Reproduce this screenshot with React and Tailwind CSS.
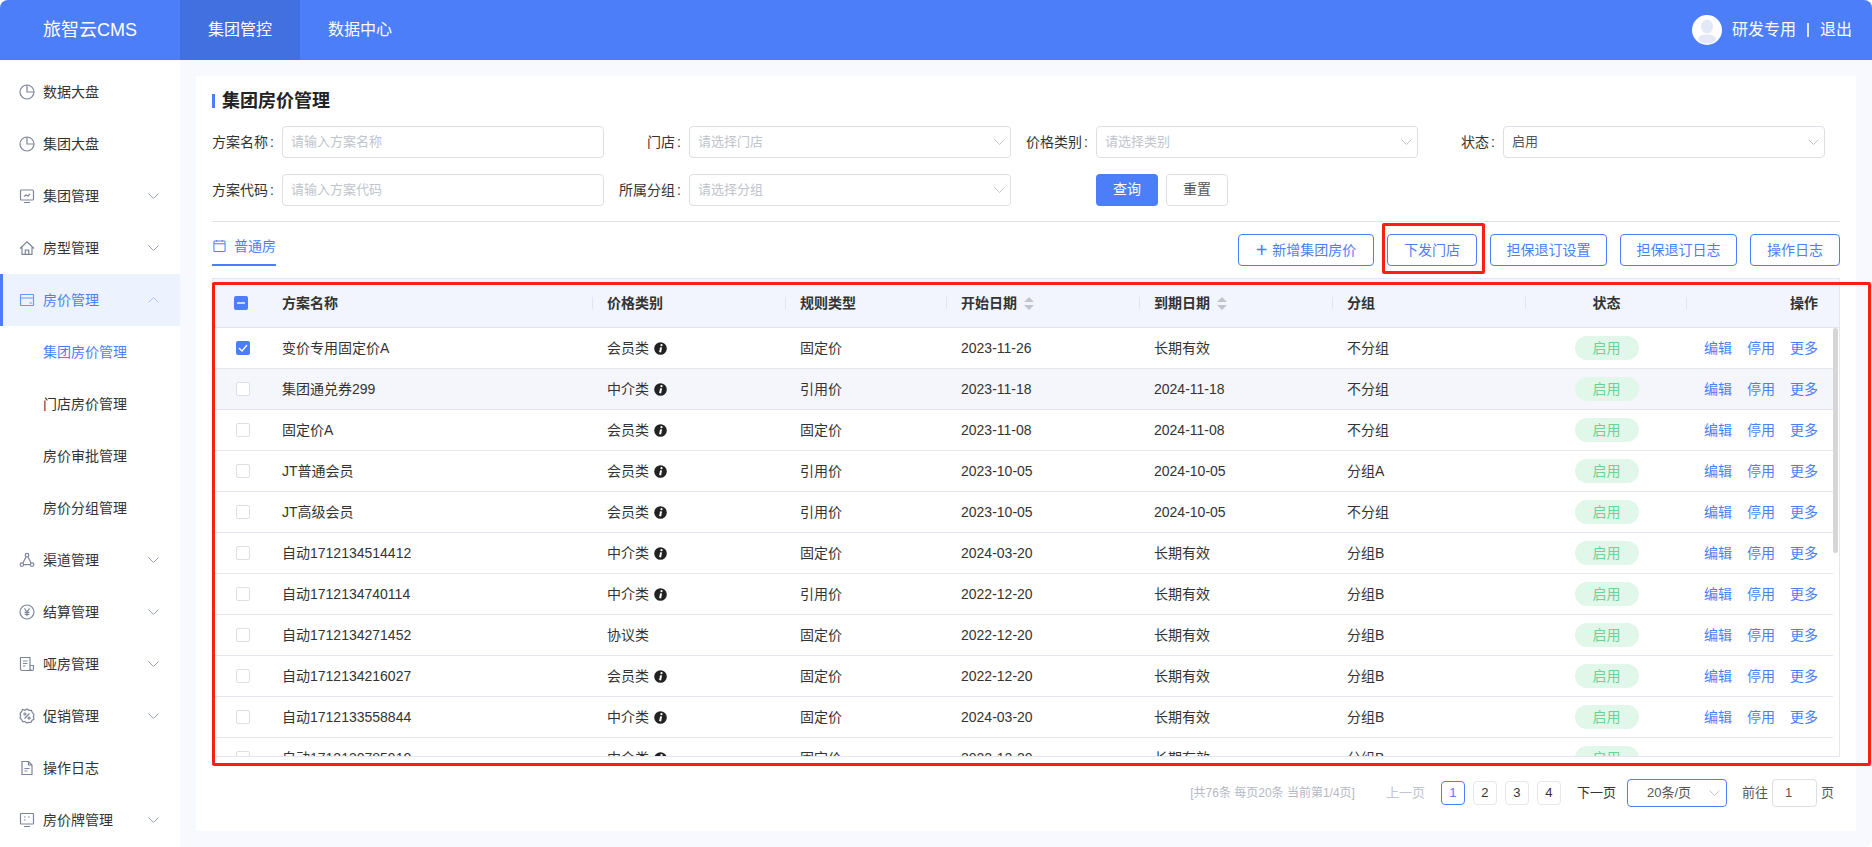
import React from "react";

const stroke = "#7d8699";

function Ico({ color, children }) {
  return (
    <svg width="16" height="16" viewBox="0 0 16 16" fill="none" stroke={color || stroke} strokeWidth="1.2" className="shrink-0">
      {children}
    </svg>
  );
}

const icons = {
  pie: (
    <>
      <circle cx="8" cy="8" r="7" />
      <path d="M8 1v7h7" />
    </>
  ),
  chart: (
    <>
      <rect x="1.5" y="2" width="13" height="10" rx="1" />
      <path d="M5 14.5h6M5 8.5l2-1.5 2 1 2-2" />
    </>
  ),
  home: <path d="M1 8.5L8 1.8l7 6.7M3 7.3v7h10v-7M6.3 14.3v-4.2h3.4v4.2" />,
  card: (
    <>
      <rect x="1.5" y="2.5" width="13" height="11" rx="0.5" />
      <path d="M1.5 6h13M10.5 11h2.5" />
    </>
  ),
  net: (
    <>
      <circle cx="8" cy="3.2" r="1.8" />
      <circle cx="2.9" cy="12.6" r="1.8" />
      <circle cx="13.1" cy="12.6" r="1.8" />
      <path d="M7.1 4.8L3.9 11M8.9 4.8L12.1 11M4.8 12.6h6.4" />
    </>
  ),
  yen: (
    <>
      <circle cx="8" cy="8" r="7" />
      <path d="M5.5 4.3L8 8l2.5-3.7M8 8v4.2M5.6 8.4h4.8M5.6 10.4h4.8" />
    </>
  ),
  receipt: <path d="M1.5 1.5h9.5v13H3a1.5 1.5 0 0 1-1.5-1.5zM4 5h4.5M4 7.5h4.5M4 10h2.5M11 9.5h3.5V13a1.5 1.5 0 0 1-3 0" />,
  promo: (
    <>
      <path d="M8 1l2 1.3 2.4.1 1 2.2 1.6 1.8-.6 2.3.6 2.3-2 1.4-1 2.1-2.4-.1L8 15l-2-1.5-2.4.1-1-2.1-1.6-1.4.6-2.3-.6-2.3 1.6-1.8 1-2.2L6 2.3z" />
      <path d="M5.5 10.5l5-5" />
      <circle cx="5.9" cy="6" r="1" />
      <circle cx="10.1" cy="10" r="1" />
    </>
  ),
  file: <path d="M3 1.5h6.5L13 5v9.5H3zM9.5 1.5V5H13M5.5 8.5h5M5.5 11h3" />,
  board: (
    <>
      <rect x="1.5" y="1.5" width="13" height="10.5" rx="0.5" />
      <path d="M5 14.5h6M5 5h1.6M9 5h1.6M5 8h1.6" />
    </>
  ),
};

function Chevron({ up, color }) {
  return (
    <svg width="11" height="6" viewBox="0 0 11 6" fill="none" stroke={color || "#97a0b3"} strokeWidth="1" className="shrink-0">
      <path d={up ? "M.5 5.5l5-5 5 5" : "M.5.5l5 5 5-5"} />
    </svg>
  );
}

function SideItem({ icon, label, arrow, active, up }) {
  return (
    <div className={"h-[52px] flex items-center pl-[16px] pr-[21px] border-l-[3px] " + (active ? "bg-[#ecf3ff] border-[#4c7efa] text-[#4c7efa]" : "border-transparent text-[#333]")}>
      <Ico color={active ? "#6f97fb" : undefined}>{icons[icon]}</Ico>
      <span className="ml-2 flex-1 text-[14px] whitespace-nowrap">{label}</span>
      {arrow && <Chevron up={up} color={active ? "#a8c0fb" : undefined} />}
    </div>
  );
}

function SubItem({ label, active }) {
  return <div className={"h-[52px] flex items-center pl-[43px] text-[14px] " + (active ? "text-[#4c7efa]" : "text-[#333]")}>{label}</div>;
}

function Field({ label, children }) {
  return (
    <div className="flex items-center">
      <div className="w-[62px] whitespace-nowrap text-[14px] text-[#333] flex justify-end">
        {label}
        {label && <span className="ml-[2px]">:</span>}
      </div>
      <div className="ml-2 w-[322px]">{children}</div>
    </div>
  );
}

function Input({ placeholder }) {
  return (
    <div className="h-[32px] border border-[#dcdfe6] rounded-[4px] flex items-center px-2 text-[13px] text-[#c0c4cc] bg-white">{placeholder}</div>
  );
}

function Select({ placeholder, value }) {
  return (
    <div className="h-[32px] border border-[#dcdfe6] rounded-[4px] flex items-center justify-between pl-2 pr-[5px] text-[13px] bg-white">
      <span className={value ? "text-[#555]" : "text-[#c0c4cc]"}>{value || placeholder}</span>
      <Chevron color="#c0c4cc" />
    </div>
  );
}

function OutBtn({ children, w }) {
  return (
    <button className={"h-[32px] border border-[#4c7efa] rounded-[4px] text-[14px] text-[#4c7efa] flex items-center justify-center bg-white " + w}>{children}</button>
  );
}

function Sort() {
  return (
    <svg width="10" height="13" viewBox="0 0 10 13" fill="#c0c4cc" className="ml-[7px]">
      <path d="M5 0l5 5H0zM5 13L0 8h10z" />
    </svg>
  );
}

function Info() {
  return (
    <svg width="13" height="13" viewBox="0 0 13 13" className="ml-[5px]">
      <circle cx="6.5" cy="6.5" r="6.3" fill="#222" />
      <path d="M7.1 5.4L6.1 10.2" stroke="#fff" strokeWidth="2" />
      <circle cx="7.5" cy="3.2" r="1.1" fill="#fff" />
    </svg>
  );
}

const rows = [
  ["变价专用固定价A", "会员类", 1, "固定价", "2023-11-26", "长期有效", "不分组"],
  ["集团通兑券299", "中介类", 1, "引用价", "2023-11-18", "2024-11-18", "不分组"],
  ["固定价A", "会员类", 1, "固定价", "2023-11-08", "2024-11-08", "不分组"],
  ["JT普通会员", "会员类", 1, "引用价", "2023-10-05", "2024-10-05", "分组A"],
  ["JT高级会员", "会员类", 1, "引用价", "2023-10-05", "2024-10-05", "不分组"],
  ["自动1712134514412", "中介类", 1, "固定价", "2024-03-20", "长期有效", "分组B"],
  ["自动1712134740114", "中介类", 1, "引用价", "2022-12-20", "长期有效", "分组B"],
  ["自动1712134271452", "协议类", 0, "固定价", "2022-12-20", "长期有效", "分组B"],
  ["自动1712134216027", "会员类", 1, "固定价", "2022-12-20", "长期有效", "分组B"],
  ["自动1712133558844", "中介类", 1, "固定价", "2024-03-20", "长期有效", "分组B"],
  ["自动1712130785910", "中介类", 1, "固定价", "2022-12-20", "长期有效", "分组B"],
];

function Head({ children, center, right }) {
  let align = "pl-[14px]";
  if (center) align = "justify-center pl-[1px]";
  if (right) align = "justify-end pr-[21px]";
  return (
    <div className="flex items-center">
      <div className={"h-3 w-full border-l border-[#e2e5ee] flex items-center font-bold " + align}>{children}</div>
    </div>
  );
}

function PageNo({ n, active }) {
  return (
    <div className={"w-[24px] h-[24px] rounded-[4px] border flex items-center justify-center text-[13px] " + (active ? "border-[#4c7efa] text-[#4c7efa]" : "border-[#e4e7ed] text-[#333]")}>{n}</div>
  );
}

export default function App() {
  return (
    <div className="relative w-[1872px] h-[847px] overflow-hidden bg-white font-['Liberation_Sans','Noto_Sans_CJK_SC',sans-serif]">
      <div className="h-full rounded-[8px] overflow-hidden flex flex-col bg-[#f7f9fe]">
        {/* top bar */}
        <div className="h-[60px] shrink-0 bg-[#4c7efa] flex items-center text-white">
          <div className="w-[180px] pl-[43px] text-[18px]">旅智云CMS</div>
          <div className="w-[120px] h-full bg-[#4370e0] flex items-center justify-center text-[16px]">集团管控</div>
          <div className="w-[120px] h-full flex items-center justify-center text-[16px]">数据中心</div>
          <div className="ml-auto flex items-center pr-5 text-[16px]">
            <div className="w-[30px] h-[30px] rounded-full bg-white overflow-hidden mr-[10px]">
              <svg width="30" height="30" viewBox="0 0 30 30" fill="#e3e8f7">
                <ellipse cx="15" cy="11.5" rx="6" ry="7" />
                <ellipse cx="15" cy="24" rx="9" ry="4.5" />
              </svg>
            </div>
            <span>研发专用</span>
            <span className="w-[2px] h-[14px] bg-white/80 mx-[11px]"></span>
            <span>退出</span>
          </div>
        </div>

        <div className="flex flex-1 min-h-0">
          {/* side menu */}
          <div className="w-[180px] shrink-0 bg-white pt-[6px] overflow-hidden">
            <SideItem icon="pie" label="数据大盘" />
            <SideItem icon="pie" label="集团大盘" />
            <SideItem icon="chart" label="集团管理" arrow />
            <SideItem icon="home" label="房型管理" arrow />
            <SideItem icon="card" label="房价管理" arrow up active />
            <SubItem label="集团房价管理" active />
            <SubItem label="门店房价管理" />
            <SubItem label="房价审批管理" />
            <SubItem label="房价分组管理" />
            <SideItem icon="net" label="渠道管理" arrow />
            <SideItem icon="yen" label="结算管理" arrow />
            <SideItem icon="receipt" label="哑房管理" arrow />
            <SideItem icon="promo" label="促销管理" arrow />
            <SideItem icon="file" label="操作日志" />
            <SideItem icon="board" label="房价牌管理" arrow />
          </div>

          {/* content */}
          <div className="flex-1 px-4 pt-4 pb-4 min-w-0">
            <div className="h-[755px] bg-white px-4 pt-[18px]">
              <div className="flex items-center h-[14px]">
                <span className="w-[3px] h-[14px] bg-[#4c7efa]"></span>
                <span className="ml-[7px] text-[18px] font-bold text-[#222]">集团房价管理</span>
              </div>

              <div className="mt-[18px] grid grid-cols-[393px_393px_393px_393px] gap-x-[14px] gap-y-4">
                <Field label="方案名称"><Input placeholder="请输入方案名称" /></Field>
                <Field label="门店"><Select placeholder="请选择门店" /></Field>
                <Field label="价格类别"><Select placeholder="请选择类别" /></Field>
                <Field label="状态"><Select value="启用" /></Field>
                <Field label="方案代码"><Input placeholder="请输入方案代码" /></Field>
                <Field label="所属分组"><Select placeholder="请选择分组" /></Field>
                <Field label="">
                  <div className="flex gap-2 -mt-px">
                    <button className="w-[62px] h-[32px] rounded-[4px] bg-[#4c7efa] text-white text-[14px]">查询</button>
                    <button className="w-[62px] h-[32px] rounded-[4px] border border-[#dcdfe6] text-[#555] text-[14px] bg-white">重置</button>
                  </div>
                </Field>
              </div>

              <div className="mt-[15px] h-px bg-[#e1e3e9]"></div>

              <div className="pt-3 flex justify-between items-end">
                <div className="h-[32px] w-[64px] border-b-2 border-[#4c7efa] flex items-start -mt-[2px] text-[#4c7efa]">
                  <svg width="14" height="14" viewBox="0 0 14 14" fill="none" stroke="#4c7efa" strokeWidth="1.1" className="mt-[5px] ml-px">
                    <rect x="1" y="1.5" width="12" height="11.5" rx="1" />
                    <path d="M1 4.5h12M4 .5v2M10 .5v2" />
                  </svg>
                  <span className="ml-2 text-[14px] leading-[24px] whitespace-nowrap">普通房</span>
                </div>
                <div className="flex gap-[13px]">
                  <OutBtn w="w-[136px]"><span className="text-[20px] font-light leading-none mr-[5px]">+</span>新增集团房价</OutBtn>
                  <OutBtn w="w-[90px]">下发门店</OutBtn>
                  <OutBtn w="w-[117px]">担保退订设置</OutBtn>
                  <OutBtn w="w-[117px]">担保退订日志</OutBtn>
                  <OutBtn w="w-[90px]">操作日志</OutBtn>
                </div>
              </div>

              {/* table */}
              <div className="mt-3 border border-[#e4e7f0] text-[14px] text-[#333]">
                <div className="h-[49px] bg-[#f2f5fe] border-b border-[#e1e4ee] grid grid-cols-[54px_325px_193px_161px_193px_193px_193px_161px_153px]">
                  <div className="flex items-center pl-[21px]">
                    <div className="w-[14px] h-[14px] rounded-[2px] bg-[#4c7efa] flex items-center justify-center">
                      <span className="w-2 h-[2px] bg-[#c9d8fd]"></span>
                    </div>
                  </div>
                  <div className="flex items-center pl-[15px] font-bold">方案名称</div>
                  <Head>价格类别</Head>
                  <Head>规则类型</Head>
                  <Head>开始日期<Sort /></Head>
                  <Head>到期日期<Sort /></Head>
                  <Head>分组</Head>
                  <Head center>状态</Head>
                  <Head right>操作</Head>
                </div>

                <div className="h-[428px] flex overflow-hidden">
                  <div className="w-[1620px]">
                    {rows.map((r, i) => (
                      <div key={i} className={"h-[41px] border-b border-[#e3e6ef] grid grid-cols-[54px_325px_193px_161px_193px_193px_193px_161px_147px] items-center " + (i === 1 ? "bg-[#f5f6fb]" : "bg-white")}>
                        <div className="pl-[23px]">
                          {i === 0 ? (
                            <div className="w-[14px] h-[14px] rounded-[2px] bg-[#4c7efa] flex items-center justify-center">
                              <svg width="10" height="8" viewBox="0 0 10 8" fill="none" stroke="#fff" strokeWidth="1.2">
                                <path d="M1 4l3 3 5-6" />
                              </svg>
                            </div>
                          ) : (
                            <div className="w-[14px] h-[14px] rounded-[2px] border border-[#dcdfe6] bg-white"></div>
                          )}
                        </div>
                        <div className="pl-[15px]">{r[0]}</div>
                        <div className="pl-[15px] flex items-center">{r[1]}{r[2] === 1 && <Info />}</div>
                        <div className="pl-[15px]">{r[3]}</div>
                        <div className="pl-[15px]">{r[4]}</div>
                        <div className="pl-[15px]">{r[5]}</div>
                        <div className="pl-[15px]">{r[6]}</div>
                        <div className="flex justify-center pl-[2px]">
                          <span className="w-[64px] h-[24px] rounded-full bg-[#e1f7e9] text-[#6bd29a] flex items-center justify-center">启用</span>
                        </div>
                        {i < 10 && (
                          <div className="flex justify-end gap-[15px] pr-[15px] text-[#4c7efa]">
                            <span>编辑</span>
                            <span>停用</span>
                            <span>更多</span>
                          </div>
                        )}
                      </div>
                    ))}
                  </div>
                  <div className="w-[6px] shrink-0 bg-white">
                    <div className="w-[5px] h-[225px] rounded-full bg-[#d6d6d6]"></div>
                  </div>
                </div>
              </div>

              {/* pagination */}
              <div className="mt-[22px] pr-[6px] h-[28px] flex items-center justify-end text-[13px] text-[#333]">
                <span className="text-[12px] text-[#b4b8c4]">[共76条 每页20条 当前第1/4页]</span>
                <span className="ml-[31px] text-[#c0c4cc]">上一页</span>
                <div className="ml-[16px] flex gap-2">
                  <PageNo n="1" active />
                  <PageNo n="2" />
                  <PageNo n="3" />
                  <PageNo n="4" />
                </div>
                <span className="ml-4">下一页</span>
                <div className="ml-[11px] w-[100px] h-[28px] rounded-[4px] border border-[#4c7efa] flex items-center justify-between pl-[19px] pr-[6px] text-[#555]">
                  <span>20条/页</span>
                  <Chevron color="#c0c4cc" />
                </div>
                <span className="ml-[15px] text-[#555]">前往</span>
                <div className="ml-[4px] w-[45px] h-[28px] rounded-[4px] border border-[#dcdfe6] flex items-center pl-3 text-[#555]">1</div>
                <span className="ml-[4px] text-[#555]">页</span>
              </div>
            </div>
          </div>
        </div>
      </div>

      {/* red annotation boxes */}
      <div className="absolute left-[1382px] top-[223px] w-[103px] h-[51px] border-[3px] border-[#ff1e12] rounded-[2px]"></div>
      <div className="absolute left-[212px] top-[282px] w-[1659px] h-[484px] border-[3px] border-[#ff1e12] rounded-[2px]"></div>
    </div>
  );
}
